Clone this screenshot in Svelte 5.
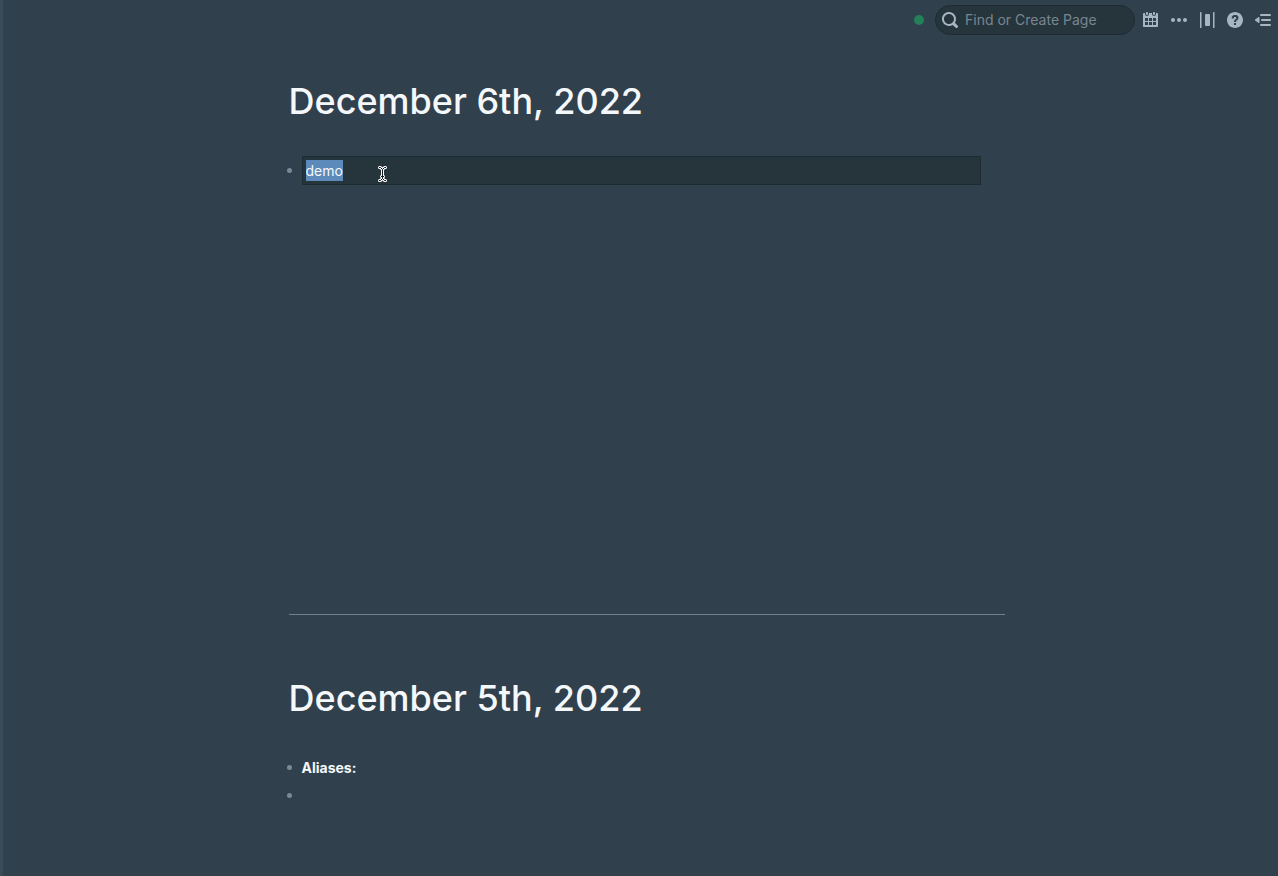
<script>
  import { onMount } from 'svelte';

  let editor;
  let text = 'demo';
  let query = '';

  onMount(() => {
    editor.focus();
    editor.select();
  });
</script>

<div class="app">
  <header class="topbar">
    <span class="status" role="status" aria-label="Synced"></span>
    <label class="search">
      <svg viewBox="0 0 16 16" aria-hidden="true"><path d="M15.55 13.43l-2.67-2.68a6.94 6.94 0 001.11-3.76c0-3.87-3.13-7-7-7s-7 3.13-7 7 3.13 7 7 7c1.39 0 2.68-.42 3.76-1.11l2.68 2.67a1.498 1.498 0 102.12-2.12zm-8.56-1.44c-2.76 0-5-2.24-5-5s2.24-5 5-5 5 2.24 5 5-2.24 5-5 5z" /></svg>
      <input type="text" aria-label="Find or Create Page" placeholder="Find or Create Page" bind:value={query} />
    </label>
    <nav class="tools" aria-label="Page tools">
      <button type="button" aria-label="Daily notes">
        <svg viewBox="0 0 16 16"><path fill-rule="evenodd" d="M11 3c.6 0 1-.5 1-1V1c0-.6-.4-1-1-1s-1 .4-1 1v1c0 .5.4 1 1 1zm3-2h-1v1c0 1.100-.9 2-2 2s-2-.9-2-2V1H6v1c0 1.100-.9 2-2 2s-2-.9-2-2V1H1c-.6 0-1 .5-1 1v12c0 .6.4 1 1 1h13c.6 0 1-.4 1-1V2c0-.6-.5-1-1-1zM5 13H2v-3h3v3zm0-4H2V6h3v3zm4 4H6v-3h3v3zm0-4H6V6h3v3zm4 4h-3v-3h3v3zm0-4h-3V6h3v3zM4 3c.6 0 1-.5 1-1V1c0-.6-.4-1-1-1S3 .4 3 1v1c0 .5.4 1 1 1z" /></svg>
      </button>
      <button type="button" aria-label="More">
        <svg viewBox="0 0 16 16"><circle cx="2" cy="8" r="2" /><circle cx="8" cy="8" r="2" /><circle cx="14" cy="8" r="2" /></svg>
      </button>
      <button type="button" aria-label="Wide layout">
        <svg viewBox="0 0 16 16"><rect x="1" width="1.500" height="16" rx=".5" /><rect x="6" y="2" width="5" height="12" rx="1" /><rect x="14" width="1.500" height="16" rx=".5" /></svg>
      </button>
      <button type="button" aria-label="Help">
        <svg viewBox="0 0 16 16"><path d="M8 0C3.580 0 0 3.580 0 8s3.580 8 8 8 8-3.580 8-8-3.580-8-8-8zM7 13v-2h2v2H7zm4.280-6.280c-.06.22-.15.42-.26.610-.1.190-.23.360-.37.530-.14.160-1.330 1.210-1.390 1.310-.08.110-.14.220-.18.350-.04.120-.08.480-.08.480H7s0-.66.080-.88c.05-.22.120-.42.220-.6.090-.17.210-.33.350-.47.150-.140 1.310-1.180 1.390-1.280.08-.1.150-.2.200-.31.050-.11.070-.22.070-.34 0-.13-.02-.27-.07-.42-.05-.15-.120-.28-.22-.39-.1-.12-.23-.22-.39-.29-.15-.080-.34-.110-.55-.110-.36 0-.67.110-.91.330-.25.220-.4.510-.460 1.160H4.720c.02-1.020.1-1.440.29-1.820.18-.38.430-.690.740-.940.310-.25.670-.440 1.080-.560.410-.130.850-.190 1.320-.190.400 0 .8.050 1.200.150.390.1.740.260 1.040.480.310.22.550.510.740.860.180.36.28.790.28 1.280 0 .3-.04.570-.13.790z" /></svg>
      </button>
      <button type="button" aria-label="Open right sidebar">
        <svg viewBox="0 0 16 16"><path d="M0 8c0-.3.1-.6.400-.8l3-2c.6-.5 1.100-.2 1.100.5v4.600c0 .7-.5 1-1.100.5l-3-2C.1 8.600 0 8.300 0 8z" /><rect x="5" y="2" width="11" height="2" rx="1" /><rect x="6" y="7" width="10" height="2" rx="1" /><rect x="5" y="12" width="11" height="2" rx="1" /></svg>
      </button>
    </nav>
  </header>

  <main class="log">
    <section class="day current">
      <h1>December 6th, 2022</h1>
      <ul>
        <li>
          <span class="bullet"></span>
          <div class="edit">
            <input type="text" aria-label="Block text" bind:this={editor} bind:value={text} />
            <svg class="caret" viewBox="0 0 9 17" aria-hidden="true">
              <path class="halo" d="M1.500 1.500H2.500L4.500 3.500L6.500 1.500H7.500M4.500 3.500V12.500M1.500 14.500H2.500L4.500 12.500L6.500 14.500H7.500M3.500 10.500H5.500" />
              <path class="beam" d="M1 1.500H2.500L4.500 3.500L6.500 1.500H8M4.500 3.500V12.500M1 14.500H2.500L4.500 12.500L6.500 14.500H8M3 10.500H6" />
            </svg>
          </div>
        </li>
      </ul>
    </section>
    <section class="day">
      <h1>December 5th, 2022</h1>
      <ul>
        <li><span class="bullet"></span><strong>Aliases:</strong></li>
        <li><span class="bullet"></span></li>
      </ul>
    </section>
  </main>
</div>

<style>
  :global(body) {
    margin: 0;
    background: #30404d;
  }
  .app {
    box-sizing: border-box;
    min-height: 100vh;
    border-left: 3px solid #394b59;
    background: #30404d;
    color: #f5f8fa;
    font-family: Inter, sans-serif;
    font-size: 14px;
    line-height: 21px;
  }
  .topbar {
    display: flex;
    align-items: center;
    justify-content: flex-end;
    height: 39px;
    padding-right: 7px;
  }
  .status {
    width: 10px;
    height: 10px;
    margin-right: 11px;
    border-radius: 50%;
    background: #238058;
  }
  .search {
    box-sizing: border-box;
    display: flex;
    align-items: center;
    gap: 7px;
    width: 200px;
    height: 30px;
    padding: 0 8px 0 6px;
    border: 1px solid #1f2b33;
    border-radius: 15px;
    background: #26343c;
  }
  svg {
    display: block;
    width: 16px;
    height: 16px;
    flex: none;
    fill: #a7b6c2;
  }
  input {
    box-sizing: border-box;
    width: 100%;
    min-width: 0;
    margin: 0;
    padding: 0;
    border: 0;
    outline: 0;
    background: transparent;
    color: #f5f8fa;
    font: inherit;
  }
  input::placeholder {
    color: #788691;
    opacity: 1;
  }
  input::selection {
    background: #5b8abb;
    color: #f5f8fa;
  }
  .tools {
    display: flex;
    gap: 12px;
    margin-left: 8px;
  }
  button {
    display: block;
    padding: 0;
    border: 0;
    background: none;
    cursor: pointer;
  }
  .log {
    max-width: 716px;
    margin: 0 auto;
    padding: 0 0 0 12px;
  }
  .day {
    padding: 36px 0 48px;
  }
  .current {
    min-height: 491px;
    border-bottom: 1px solid #74818b;
  }
  .current + .day {
    padding-top: 57px;
  }
  h1 {
    margin: 0 0 28px;
    font-size: 36px;
    line-height: 53px;
    font-weight: 500;
  }
  ul {
    margin: 0;
    padding: 0;
    list-style: none;
  }
  li {
    display: flex;
    align-items: center;
    gap: 10px;
    min-height: 28px;
    margin-right: 24px;
  }
  .bullet {
    flex: none;
    width: 5px;
    height: 5px;
    margin-left: -2px;
    border-radius: 50%;
    background: #7b8994;
  }
  strong {
    font-weight: 700;
  }
  .edit {
    position: relative;
    flex: 1;
    padding: 3px;
    border: 1px solid #1f2b33;
    background: #26343c;
  }
  .edit input {
    display: block;
    height: 21px;
  }
  .caret {
    position: absolute;
    top: 9px;
    left: 75px;
    width: 9px;
    height: 17px;
    fill: none;
    overflow: visible;
    pointer-events: none;
  }
  .halo {
    stroke: #ffffff;
    stroke-width: 3;
    stroke-linecap: round;
    stroke-linejoin: round;
  }
  .beam {
    stroke: #11181c;
    stroke-width: 1;
  }
</style>
